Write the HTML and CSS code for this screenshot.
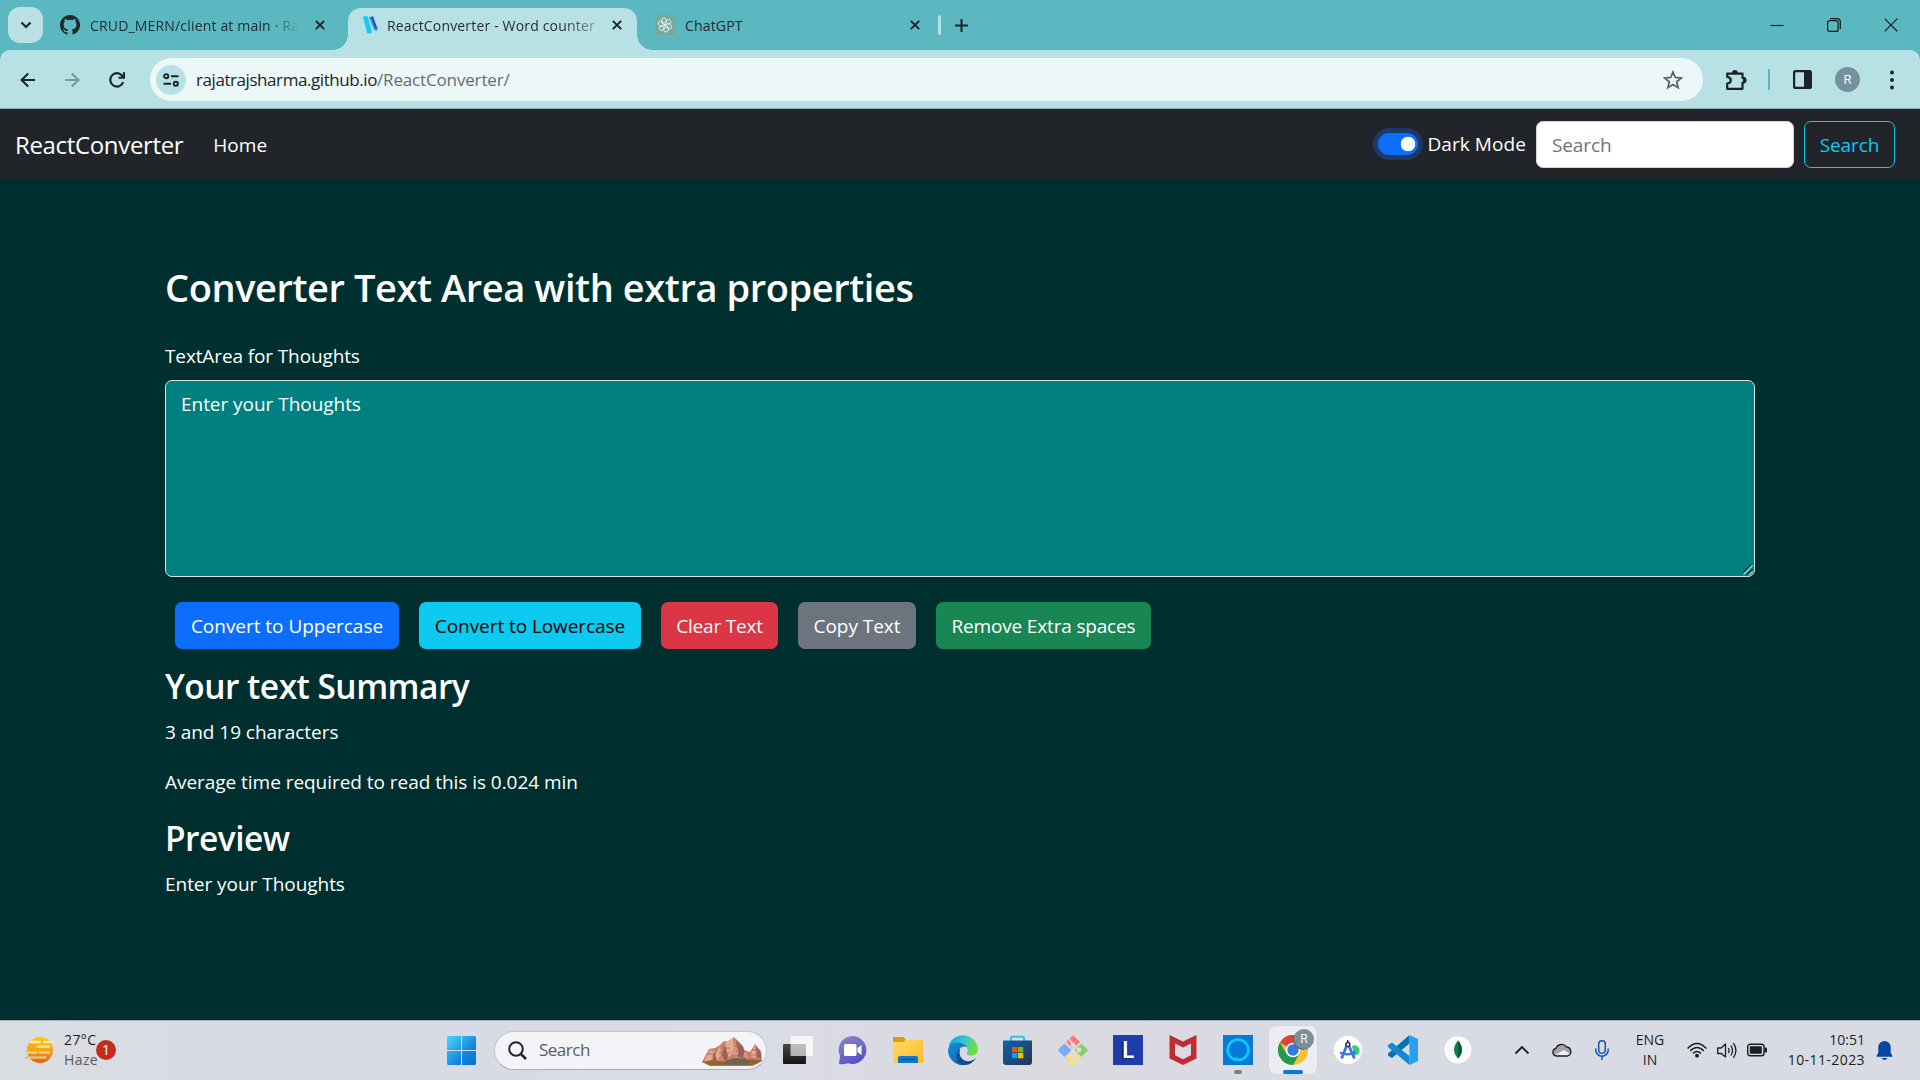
FILE: index.html
```html
<!DOCTYPE html>
<html lang="en">
<head>
<meta charset="utf-8">
<title>ReactConverter - Word counter</title>
<link rel="stylesheet" href="styles.css">
</head>
<body>
<header class="tabs">
  <button class="tab-search" aria-label="Search tabs"><svg width="12" height="8" viewBox="0 0 12 8"><path d="M1.5 1.5 6 6l4.500-4.500" fill="none" stroke="#1c2326" stroke-width="2.200"/></svg></button>
  <div class="tab tab-first">
    <svg class="fav" width="20" height="20" viewBox="0 0 16 16"><path fill="#1f2a30" d="M8 0C3.580 0 0 3.580 0 8c0 3.540 2.290 6.530 5.470 7.590.4.070.55-.17.55-.38v-1.490c-2.010.37-2.530-.49-2.690-.94-.09-.23-.48-.94-.82-1.130-.28-.15-.68-.52-.01-.53.63-.01 1.080.58 1.230.82.72 1.210 1.870.87 2.330.66.07-.52.28-.87.51-1.070-1.780-.2-3.640-.89-3.640-3.950 0-.87.31-1.590.82-2.150-.08-.2-.36-1.020.08-2.120 0 0 .67-.21 2.200.82a7.600 7.600 0 0 1 4 0c1.530-1.040 2.200-.82 2.200-.82.44 1.100.16 1.920.08 2.120.51.56.82 1.270.82 2.150 0 3.070-1.870 3.750-3.650 3.950.29.25.54.73.54 1.480v2.200c0 .21.15.46.55.38A8 8 0 0 0 8 0z"/></svg>
    <span class="tab-title">CRUD_MERN/client at main · Raj</span>
    <svg class="x" width="10" height="10" viewBox="0 0 10 10"><path d="M.8.8l8.400 8.400M9.200.8.8 9.200"/></svg>
  </div>
  <div class="tab tab-active">
    <svg class="fav" width="17" height="20" viewBox="0 0 17 20"><path d="M1 2Q4 0 6 2l4 15q-1 3-5 1z" fill="#19c9ee"/><path d="M7 2q3-1 4 1l4 13-3-1z" fill="#1b9be0"/><path d="M11 1l5 14-3-2-4-11z" fill="#2b55ad"/></svg>
    <span class="tab-title">ReactConverter - Word counter</span>
    <svg class="x" width="10" height="10" viewBox="0 0 10 10"><path d="M.8.8l8.400 8.400M9.200.8.8 9.200"/></svg>
  </div>
  <div class="tab tab-last">
    <svg class="fav" width="20" height="20" viewBox="0 0 20 20"><rect width="20" height="20" rx="3" fill="#75a99c"/><g transform="translate(2 2) scale(.8)" fill="none" stroke="#eef6f3" stroke-width="1.100"><g id="petal"><path d="M10 10V5.500l3-1.800a2.900 2.900 0 0 1 4 4L13 10"/></g><use href="#petal" transform="rotate(60 10 10)"/><use href="#petal" transform="rotate(120 10 10)"/><use href="#petal" transform="rotate(180 10 10)"/><use href="#petal" transform="rotate(240 10 10)"/><use href="#petal" transform="rotate(300 10 10)"/></g></svg>
    <span class="tab-title">ChatGPT</span>
    <svg class="x" width="10" height="10" viewBox="0 0 10 10"><path d="M.8.8l8.400 8.400M9.200.8.8 9.200"/></svg>
  </div>
  <i class="tab-sep"></i>
  <svg class="plus" width="13" height="13" viewBox="0 0 13 13"><path d="M6.500 0v13M0 6.500h13" stroke="#1c2326" stroke-width="2"/></svg>
  <div class="window-controls">
    <svg width="14" height="14" viewBox="0 0 14 14"><path d="M.5 7.500h13"/></svg>
    <svg width="14" height="14" viewBox="0 0 14 14"><rect x=".6" y="2.600" width="10.500" height="10.800" rx="2"/><path d="M3 .7h7q3.300 0 3.300 3.300v7"/></svg>
    <svg width="14" height="14" viewBox="0 0 14 14"><path d="M.7.7l12.600 12.600M13.300.7.7 13.300"/></svg>
  </div>
</header>

<div class="toolbar">
  <svg class="back" width="16" height="16" viewBox="0 0 16 16"><path d="M15 8H1.600M8.200 1.400 1.600 8l6.600 6.600"/></svg>
  <svg class="forward" width="16" height="16" viewBox="0 0 16 16"><path d="M1 8h13.400M7.800 1.400 14.400 8l-6.600 6.600"/></svg>
  <svg class="reload" width="18" height="18" viewBox="0 0 18 18"><path d="M15.200 11.200A6.700 6.700 0 1 1 14 4.500l1.600 1.700M16 1.200v5.500h-5.500"/></svg>
  <div class="omnibox">
    <span class="site-info"><svg width="16" height="14" viewBox="0 0 16 14"><g fill="none" stroke="#1c2326" stroke-width="1.900"><circle cx="3.200" cy="3.200" r="2.100"/><path d="M8 3.200h7.500M.5 10.800H8"/><circle cx="12.800" cy="10.800" r="2.100"/></g></svg></span>
    <span class="url"><b>rajatrajsharma.github.io</b><i>/ReactConverter/</i></span>
    <svg class="star" width="20" height="20" viewBox="0 0 20 20"><path d="M10 2l2.300 5.500 5.900.5-4.500 3.900 1.400 5.800-5.100-3.100-5.100 3.100 1.400-5.800L1.800 8l5.900-.5z" fill="none" stroke="#5b6467" stroke-width="1.800"/></svg>
  </div>
  <svg class="puzzle" width="22" height="22" viewBox="0 0 22 22"><path d="M2.200 4.700h15.300v4.200q3 0 3 2.300t-3 2.300v6.300H2.200v-5.300q3.600-.6 3.600-3.300T2.200 7.900z" fill="none" stroke="#1c2326" stroke-width="2.200" stroke-linejoin="round"/><path d="M7 4a2.900 2.900 0 0 1 5.800 0zM18 8.500a2.800 2.800 0 0 1 0 5.500z" fill="#1c2326"/></svg>
  <i class="tool-sep"></i>
  <svg class="panel" width="19" height="19" viewBox="0 0 19 19"><rect x="1.100" y="1.100" width="16.800" height="16.800" rx="1.500" fill="none" stroke="#1c2326" stroke-width="2.200"/><path d="M11 1h7v17h-7z" fill="#1c2326"/></svg>
  <span class="avatar">R</span>
  <svg class="dots" width="4" height="20" viewBox="0 0 4 20"><g fill="#1c2326"><circle cx="2" cy="2.500" r="2"/><circle cx="2" cy="10" r="2"/><circle cx="2" cy="17.500" r="2"/></g></svg>
</div>

<nav class="navbar">
  <a class="brand">ReactConverter</a>
  <a class="nav-link">Home</a>
  <label class="mode"><span class="switch"></span><span>Dark Mode</span></label>
  <input class="search-input" type="text" placeholder="Search">
  <button class="btn btn-outline">Search</button>
</nav>

<main class="page">
  <h1>Converter Text Area with extra properties</h1>
  <label class="area-label" for="thoughts">TextArea for Thoughts</label>
  <div class="area-wrap">
    <textarea class="area" id="thoughts" spellcheck="false">Enter your Thoughts</textarea>
    <svg class="grip" width="12" height="12" viewBox="0 0 12 12"><path d="M.5 9.500l9-9M5.500 10.500l5-5" stroke="#032c2d" stroke-width="1.500"/><path d="M1.500 10.500l9-9M6.800 11.200l4-4" stroke="#a5d3cf" stroke-width="1.500"/></svg>
  </div>
  <div class="actions">
    <button class="btn btn-primary">Convert to Uppercase</button>
    <button class="btn btn-info">Convert to Lowercase</button>
    <button class="btn btn-danger">Clear Text</button>
    <button class="btn btn-secondary">Copy Text</button>
    <button class="btn btn-success">Remove Extra spaces</button>
  </div>
  <h2>Your text Summary</h2>
  <p>3 and 19 characters</p>
  <p>Average time required to read this is 0.024 min</p>
  <h2>Preview</h2>
  <p>Enter your Thoughts</p>
</main>

<footer class="taskbar">
  <div class="weather">
    <svg width="30" height="26" viewBox="0 0 30 26"><defs><linearGradient id="sun" x2="0" y2="1"><stop offset="0" stop-color="#fdc90a"/><stop offset=".5" stop-color="#f6a313"/><stop offset="1" stop-color="#e4600c"/></linearGradient></defs><circle cx="15" cy="13" r="13" fill="url(#sun)"/><g stroke-linecap="round" stroke-width="2.400"><path d="M6 5h9M19 5h9.500" stroke="#f8e9b4"/><path d="M13 9.500h11" stroke="#fae5a8"/><path d="M1.500 15.500h10M15 15.500h9" stroke="#ead08c"/><path d="M1.500 20.500h19" stroke="#dcc388"/></g></svg>
    <div class="weather-text"><span class="temp">27°C</span><span class="cond">Haze</span></div>
    <span class="alert">1</span>
  </div>
  <div class="apps">
    <svg width="29" height="29" viewBox="0 0 29 29"><defs><linearGradient id="win" x2="1" y2="1"><stop offset="0" stop-color="#50d5fc"/><stop offset=".6" stop-color="#1688df"/><stop offset="1" stop-color="#0072d0"/></linearGradient></defs><path fill="url(#win)" d="M1 0h13v14H0V1zM15 0h13l1 1v13H15zM0 15h14v14H1l-1-1zM15 15h14v13l-1 1H15z"/></svg>
    <div class="task-search">
      <svg width="19" height="19" viewBox="0 0 19 19"><g fill="none" stroke="#262628" stroke-width="2"><circle cx="8" cy="8" r="6.800"/><path d="M12.800 12.800l5.200 5.200" stroke-width="2.600"/></g></svg>
      <span>Search</span>
      <svg class="rocks" width="61" height="30" viewBox="0 0 61 30"><path d="M0 25l7-13 6-1 5-3 4-4 5 1 5-5 4 4 5 5 1 4 6 2 5-8 6 7 1 10-9 5H8z" fill="#c98269"/><path d="M24 5l7-4 1 10-4 9-6-3zM8 13l4 1-3 10-7 1zM53 8l1 13-6-2zM18 9l1 8-4 7-2-5z" fill="#e5ab90"/><path d="M34 3l7 7 4 13-9-4zM54 9l5 7 0 6-4-2zM23 8l3 11-2 6-4-7zM12 15l3 8-4 3z" fill="#98605a"/><path d="M33 5l4 10-3 7-4-4zM43 13l4 9-6-2z" fill="#db957a"/><path d="M6 17h8M20 11h8M17 16h11M32 9h7M34 14h9M47 18h12M30 19h10M50 13h6" stroke="#a9624f" stroke-width=".8"/><path d="M0 25l10-2 14 2 16-3 20 1q-3 4-12 5.500H8z" fill="#94662f"/><path d="M21 26q11-8 24-3l4 2-8 3z" fill="#6f6259"/></svg>
    </div>
    <svg width="30" height="29" viewBox="0 0 30 29"><defs><linearGradient id="dark" x2="0" y2="1"><stop offset="0" stop-color="#484848"/><stop offset="1" stop-color="#151515"/></linearGradient></defs><rect y="8" width="23" height="20" rx="1" fill="url(#dark)"/><rect x="7.500" y="0" width="22.500" height="20" rx="1" fill="#fff" fill-opacity=".65"/><path d="M23 0h7v20h-7zM8 0h22v8H8z" fill="#f8f8f8" fill-opacity=".6"/></svg>
    <svg width="30" height="30" viewBox="0 0 30 30"><defs><linearGradient id="chat" x2=".5" y2="1"><stop offset="0" stop-color="#a07cc0"/><stop offset=".4" stop-color="#7575cf"/><stop offset="1" stop-color="#5a4fc4"/></linearGradient></defs><path d="M15 1a14 14 0 1 1-5 27.300Q5 30 1 29l1-8A14 14 0 0 1 15 1z" fill="url(#chat)"/><rect x="6" y="9" width="12.500" height="12" rx="1.500" fill="#fff"/><path d="M19.500 13l4-3v10l-4-3z" fill="#fff"/></svg>
    <svg width="30" height="28" viewBox="0 0 30 28"><defs><linearGradient id="fold" x2="1" y2="1"><stop offset="0" stop-color="#ffdc66"/><stop offset="1" stop-color="#fbbb29"/></linearGradient></defs><path d="M0 1h10.500l2.500 3-3 5H0z" fill="#dd9c0c"/><path d="M0 6h10l3-2h17v23H0z" fill="url(#fold)"/><path d="M5 27v-5q0-2 2-2h16q2 0 2 2v5z" fill="#0f78cc"/><path d="M8.500 23.500h13" stroke="#0a4c8c" stroke-width="1.200"/></svg>
    <svg width="30" height="30" viewBox="0 0 30 30"><defs><linearGradient id="e1" x2="1" y2=".3"><stop offset="0" stop-color="#1795dc"/><stop offset=".5" stop-color="#34c3d8"/><stop offset="1" stop-color="#6bdf4a"/></linearGradient><linearGradient id="e2" x2="1" y2="1"><stop offset="0" stop-color="#1592de"/><stop offset="1" stop-color="#0c57a8"/></linearGradient></defs><path d="M1 10A15 15 0 0 1 30 14q0 6-6.500 6.500-4.500 0-5-2 1.700-1.500 1-4Q17 8 9 8q-5 0-8 4z" fill="url(#e1)"/><path d="M0 15q1-7 8-7.500 8 0 11 4.500-8-2-8 6 0 7 7 12A15 15 0 0 1 0 15z" fill="url(#e2)"/><path d="M12 14q-2 8 4.500 11.500 6 2.500 12-3Q23 31 15 30 7 27 9 19q.5-3.500 3-5z" fill="#134b8c"/></svg>
    <svg width="30" height="30" viewBox="0 0 30 30"><defs><linearGradient id="st" x2="1" y2="1"><stop offset="0" stop-color="#0765b3"/><stop offset="1" stop-color="#28344f"/></linearGradient></defs><path d="M8 7V3q0-1.200 1.200-1.200h10.600Q21 1.800 21 3v4" fill="none" stroke="#32bdf0" stroke-width="2"/><path d="M0 5.500h29V27q0 3-3 3H3q-3 0-3-3z" fill="url(#st)"/><path d="M9 12h5.300v5.300H9z" fill="#f25022"/><path d="M15 12h5.300v5.300H15z" fill="#7fba00"/><path d="M9 18h5.300v5.300H9z" fill="#00a4ef"/><path d="M15 18h5.300v5.300H15z" fill="#ffb900"/></svg>
    <svg width="30" height="30" viewBox="0 0 30 30"><path d="M14 1q1-1 2 0l6 6-7 7-7-7z" fill="#f87c7c"/><path d="M6.500 8.500l7 6.500-7 7L.7 16q-1-1 0-2z" fill="#7dabf8"/><path d="M23.500 8.500l5.800 5.500q1 1 0 2l-5.800 6-7-7z" fill="#89cf69"/><path d="M15 16.500l7 7-6 5.800q-1 .9-2 0L8 23.500z" fill="#fbdf77"/><g stroke="#dddce2" stroke-width="1.500" fill="#dddce2"><path d="M11 4l4 6v13M15 10l6 5" fill="none"/><circle cx="15" cy="10" r="1.700"/><circle cx="21" cy="15" r="1.700"/><circle cx="15" cy="22" r="1.700"/></g></svg>
    <span class="l-app">L</span>
    <svg width="30" height="30" viewBox="0 0 30 30"><path d="M1.500 0L15 6.500 28.500 0v23.500L15 30 1.500 23.500zM7 8.500v11.800l8 3.900 8-3.900V8.500l-8 4z" fill="#c02c31" fill-rule="evenodd"/></svg>
    <span class="running"><svg width="30" height="30" viewBox="0 0 30 30"><path d="M0 0h30v30H0z" fill="#0779d8"/><path d="M13 25a10.300 10.300 0 1 1 4 0q-3.200.3-4-2.500" fill="none" stroke="#0ccdfb" stroke-width="2.600"/></svg></span>
    <span class="chrome"><svg width="30" height="30" viewBox="0 0 30 30"><circle cx="15" cy="15" r="15" fill="#fbc02d"/><path d="M15 15L2 7.500A15 15 0 0 1 28 7.500H15z" fill="#db4437"/><path d="M2 7.500A15 15 0 0 0 15 30l6.500-11.200L15 15 8.500 18.700z" fill="#249a50"/><circle cx="15" cy="15" r="7.300" fill="#fff"/><circle cx="15" cy="15" r="5.700" fill="#3379e8"/></svg><span class="profile">R</span></span>
    <svg width="30" height="30" viewBox="0 0 30 30"><circle cx="15" cy="15" r="13.500" fill="#fff"/><circle cx="15" cy="15" r="13.300" fill="none" stroke="#fff" stroke-width="1.800" stroke-dasharray="4 1.200"/><path d="M19 11a5 5 0 0 1 5 9l-3 .5z" fill="#35c97a"/><path d="M14 10L8.500 23.500M15.500 10l6 13.500" stroke="#3b74e8" stroke-width="2.800"/><path d="M7 17.500q8 4 15.500-.5" stroke="#3b74e8" stroke-width="2.200" fill="none"/><path d="M14.800 5v3" stroke="#26364b" stroke-width="1.600"/><circle cx="14.800" cy="9.500" r="2" fill="#fff" stroke="#26364b" stroke-width="1.500"/></svg>
    <svg width="30" height="30" viewBox="0 0 30 30"><path d="M21.500 0v8.500L4 23 0 20.500v-2z" fill="#0770b4"/><path d="M4 7.500L0 10v2l21.500 18v-9z" fill="#1489d2"/><path d="M21.500 0L30 4v22l-8.500 4z" fill="#27a0ee"/></svg>
    <svg width="30" height="30" viewBox="0 0 30 30"><circle cx="15" cy="15.400" r="14" fill="#c8cad2"/><circle cx="15" cy="15" r="13.700" fill="#fafafa"/><path d="M15 5.500Q23 15 15 23.500 7 15 15 5.500z" fill="#12804a"/><path d="M15 5.500Q23 15 15 23.500z" fill="#095a36"/></svg>
  </div>
  <div class="tray">
    <svg class="t-chev" width="16" height="10" viewBox="0 0 16 10"><path d="M1.500 8.500 8 2l6.500 6.500" fill="none" stroke="#1d1d1f" stroke-width="1.800"/></svg>
    <svg class="t-cloud" width="20" height="14" viewBox="0 0 20 14"><path d="M4.500 13A3.900 3.900 0 0 1 4 5.300 6 6 0 0 1 14.500 4 4.600 4.600 0 0 1 15.500 13z" fill="#a4a4a8"/><path d="M4.500 13 3 12l9-5 6 4-2.500 2z" fill="#f1f1f2"/><path d="M4.500 13A3.900 3.900 0 0 1 4 5.300 6 6 0 0 1 14.500 4 4.600 4.600 0 0 1 15.500 13z" fill="none" stroke="#1d1d1f" stroke-width="1.300"/></svg>
    <svg class="t-mic" width="14" height="20" viewBox="0 0 14 20"><g fill="none" stroke="#1555a8" stroke-width="1.500"><rect x="3.700" y=".8" width="6.600" height="12.400" rx="3.300"/><path d="M.8 8.500v1.500a6.200 6.200 0 0 0 12.400 0V8.500M7 16.200V20"/></g></svg>
    <div class="lang"><span>ENG</span><span>IN</span></div>
    <svg class="t-wifi" width="20" height="16" viewBox="0 0 20 16"><g fill="none" stroke="#1d1d1f" stroke-width="1.400"><path d="M.6 6.500q9.400-10 18.800 0M3.200 9q6.800-7 13.600 0M5.900 11.500q4.100-4 8.200 0"/></g><circle cx="10" cy="13.700" r="1.900" fill="#1d1d1f"/></svg>
    <svg class="t-vol" width="20" height="17" viewBox="0 0 20 17"><g fill="none" stroke="#1d1d1f" stroke-width="1.300"><path d="M.7 6h3.500L8.500 2v13L4.200 11.500H.7z" stroke-linejoin="round"/><path d="M11.300 6q1.600 2.500 0 5M13.800 3.500q3.500 5 0 10M16.400 1.200q5 7.300 0 14.600"/></g></svg>
    <svg class="t-bat" width="20" height="14" viewBox="0 0 20 14"><rect x=".7" y="1.200" width="16.300" height="11.600" rx="2.500" fill="none" stroke="#1d1d1f" stroke-width="1.400"/><rect x="2.800" y="3.300" width="12" height="7.400" rx="1" fill="#1d1d1f"/><path d="M17.500 4.500h1.300q1.200 0 1.200 1.200v2.600q0 1.200-1.200 1.200h-1.300z" fill="#1d1d1f"/></svg>
    <div class="clock"><span class="time">10:51</span><span class="date">10-11-2023</span></div>
    <svg class="t-bell" width="17" height="19" viewBox="0 0 17 19"><path d="M8.500 0a6.200 6.200 0 0 1 6.200 6.200v5.600L16.500 15v.8H.5V15l1.800-3.200V6.200A6.200 6.200 0 0 1 8.500 0zM5.700 17h5.600q-.8 2-2.800 2t-2.800-2z" fill="#0446a0"/></svg>
  </div>
</footer>
</body>
</html>
```
FILE: styles.css
```css
* { box-sizing: border-box; }

body {
  margin: 0;
  width: 1920px;
  height: 1080px;
  overflow: hidden;
  display: flex;
  flex-direction: column;
  /* the strip colour shows behind the toolbar's rounded corners */
  background: linear-gradient(#5bb8c1 70px, #002f2f 70px);
  color: #fff;
  font: 19px/30px "Open Sans", "Noto Sans", sans-serif;
}

svg { display: block; flex: none; }
button, input, textarea { font: inherit; margin: 0; }

/* Browser tab strip */
.tabs {
  height: 50px;
  flex: none;
  display: flex;
  align-items: center;
  padding-left: 8px;
  color: #1f2a30;
  font-size: 14px;
}

.tab-search {
  width: 35px;
  height: 36px;
  border: 0;
  border-radius: 12px;
  background: #b7e1e4;
  display: grid;
  place-items: center;
  padding: 0;
}

.tab { display: flex; align-items: center; height: 42px; }
.tab .x { stroke: #1c2326; stroke-width: 1.9; }

.tab-title {
  flex: none;
  overflow: hidden;
  white-space: nowrap;
  line-height: 24px;
  padding-top: 1px;
  letter-spacing: .17px;
}

.tab-first { margin-left: 17px; width: 288px; }
.tab-first .tab-title {
  width: 215px;
  margin: 0 10px;
  -webkit-mask-image: linear-gradient(90deg, #000 180px, transparent 209px);
  mask-image: linear-gradient(90deg, #000 180px, transparent 209px);
}

.tab-active {
  position: relative;
  align-self: flex-end;
  width: 289px;
  height: 42px;
  padding: 0 0 8px 14px;
  background: #b7e1e4;
  border-radius: 13px 13px 0 0;
}
.tab-active::before,
.tab-active::after {
  content: "";
  position: absolute;
  bottom: 0;
  width: 15px;
  height: 15px;
}
.tab-active::before { left: -15px; background: radial-gradient(circle at 0 0, transparent 14.5px, #b7e1e4 15px); }
.tab-active::after { right: -15px; background: radial-gradient(circle at 100% 0, transparent 14.5px, #b7e1e4 15px); }
.tab-active .tab-title {
  width: 210px;
  margin: 0 15px 0 8px;
  -webkit-mask-image: linear-gradient(90deg, #000 175px, rgba(0, 0, 0, .35) 208px);
  mask-image: linear-gradient(90deg, #000 175px, rgba(0, 0, 0, .35) 208px);
}

.tab-last { margin-left: 18px; width: 283px; }
.tab-last .tab-title { width: 215px; margin: 0 10px; }

.tab-sep { width: 3px; height: 20px; background: #b7e1e4; border-radius: 2px; }
.plus { margin-left: 14px; }

.window-controls {
  display: flex;
  gap: 43px;
  margin: 0 22px 0 auto;
  fill: none;
  stroke: #10191c;
  stroke-width: 1.2;
}

/* Address bar */
.toolbar {
  height: 59px;
  flex: none;
  display: flex;
  align-items: center;
  padding: 0 26px 0 20px;
  background: #b7e1e4;
  box-shadow: inset 0 -1px #8eb0b3;
  border-radius: 10px 10px 0 0;
}

.back, .forward, .reload { fill: none; stroke: #1c2326; stroke-width: 2.1; }
.forward { margin-left: 28px; stroke: #7b989c; }
.reload { margin-left: 28px; }

.omnibox {
  width: 1553px;
  height: 43px;
  margin-left: 24px;
  padding: 0 20px 0 6px;
  display: flex;
  align-items: center;
  border-radius: 22px;
  background: #ecf8f8;
}
.site-info {
  width: 30px;
  height: 30px;
  border-radius: 50%;
  background: #b7e1e4;
  display: grid;
  place-items: center;
}
.url { margin-left: 10px; font-size: 17px; }
.url b { font-weight: 400; letter-spacing: -.43px; color: #1c2326; }
.url i { font-style: normal; letter-spacing: -.15px; color: #5f6e71; }
.star { margin-left: auto; }

.puzzle { margin-left: 22px; }
.tool-sep { width: 2px; height: 21px; margin-left: 21px; background: #5bb8c1; }
.panel { margin-left: 23px; }
.avatar {
  width: 25px;
  height: 25px;
  margin-left: 23px;
  border-radius: 50%;
  background: #78909c;
  color: #f3f6f7;
  font: 13px/25px Roboto, sans-serif;
  text-align: center;
}
.dots { margin-left: auto; }

/* Site navigation */
.navbar {
  height: 70px;
  flex: none;
  display: flex;
  align-items: center;
  padding: 1px 25px 0 15px;
  background: #212529;
}
.brand { font-size: 24px; letter-spacing: -.34px; }
.nav-link { margin-left: 30px; letter-spacing: .05px; }
.mode {
  margin-left: auto;
  display: flex;
  align-items: center;
  gap: 9px;
  padding-bottom: 2px;
  letter-spacing: .08px;
}
.switch {
  width: 40px;
  height: 22px;
  border-radius: 11px;
  background: radial-gradient(circle at 30px 11px, #fff 7px, transparent 7.6px) #0d6efd;
  box-shadow: 0 0 0 5px #1d3a66;
}
.search-input {
  width: 258px;
  height: 47px;
  margin-left: 10px;
  padding: 0 15px;
  border: 1px solid #ced4da;
  border-radius: 7px;
  background: #fff;
  letter-spacing: -.11px;
}
.search-input::placeholder { color: #6c757d; opacity: 1; }

.btn {
  height: 47px;
  padding: 0 14px;
  border: 1px solid transparent;
  border-radius: 7px;
  color: #fff;
  white-space: nowrap;
  letter-spacing: -.07px;
}
.btn-outline {
  width: 91px;
  margin-left: 10px;
  border-color: #0dcaf0;
  background: transparent;
  color: #0dcaf0;
}

/* Page content */
.page { flex: 1; padding: 84px 165px 0; background: #002f2f; }
h1, h2 { margin: 0; font-weight: 600; }
h1 { font-size: 38px; line-height: 48px; letter-spacing: -.42px; }
h2 { font-size: 33.5px; line-height: 42px; letter-spacing: -.52px; margin-bottom: 10px; }
p { margin: 0 0 20px; letter-spacing: -.04px; }
.area-label { display: block; margin: 30px 0 9px; letter-spacing: -.12px; }
.area-wrap { position: relative; }
.area {
  display: block;
  width: 1590px;
  height: 197px;
  padding: 8px 15px;
  border: 1px solid #dee2e6;
  border-radius: 7px;
  outline: 0;
  background: #008080;
  color: #fff;
  letter-spacing: -.04px;
  resize: none;
}
.grip { position: absolute; right: 1px; bottom: 1px; pointer-events: none; }
.actions { display: flex; gap: 20px; padding: 25px 10px 16px; }
.btn-primary { width: 224px; background: #0d6efd; letter-spacing: -.03px; }
.btn-info { width: 222px; background: #0dcaf0; color: #000; }
.btn-danger { width: 117px; background: #dc3545; letter-spacing: -.2px; }
.btn-secondary { width: 118px; background: #6c757d; letter-spacing: -.05px; }
.btn-success { width: 215px; background: #198754; letter-spacing: -.17px; }

/* Desktop taskbar */
.taskbar {
  height: 60px;
  flex: none;
  display: flex;
  align-items: center;
  padding-bottom: 1px;
  border-top: 1px solid #a9aeb4;
  background: linear-gradient(90deg, #dadddf 0, #d8dbe5 12%, #d9dbe6 40%, #dbdae0 52%, #d9dbe3 65%, #d8dbe4 100%);
  color: #1f1f21;
  font-size: 14px;
  line-height: 20px;
}
.weather { position: relative; width: 447px; flex: none; display: flex; align-items: center; padding-left: 25px; }
.weather-text { display: flex; flex-direction: column; margin-left: 9px; letter-spacing: .4px; }
.cond { color: #59595c; }
.alert {
  position: absolute;
  left: 96px;
  top: 10px;
  width: 20px;
  height: 20px;
  border-radius: 50%;
  background: #c42b1c;
  color: #fff;
  text-align: center;
}
.apps { display: flex; align-items: center; gap: 25px; flex: none; }
.task-search {
  width: 273px;
  height: 39px;
  margin: 0 -9px 0 -7px;
  padding: 0 3px 0 13px;
  display: flex;
  align-items: center;
  border: 1px solid #c3c5cf;
  border-bottom-color: #a9abb5;
  border-radius: 20px;
  background: #f3f4f8;
  color: #5b5c60;
  font-size: 17px;
  letter-spacing: -.5px;
}
.task-search span { margin-left: 12px; }
.rocks { margin-left: auto; margin-top: 3px; }
.l-app {
  width: 30px;
  height: 30px;
  background: #1e3cab;
  color: #fff;
  text-align: center;
  font: 600 23px/29px "Noto Sans", sans-serif;
  text-shadow: -2px 1px #10305c;
}
.running, .chrome { position: relative; width: 30px; height: 30px; }
.running::after, .chrome::after {
  content: "";
  position: absolute;
  top: 35px;
  left: 11px;
  width: 8px;
  height: 4px;
  border-radius: 2px;
  background: #7e7e84;
}
.chrome::before {
  content: "";
  position: absolute;
  inset: -9px;
  border-radius: 6px;
  background: #ececf2;
  box-shadow: 0 0 1px #b0b0ba;
}
.chrome svg { position: relative; }
.chrome::after { left: 5px; width: 20px; background: #0779d8; }
.profile {
  position: absolute;
  left: 16px;
  top: -6px;
  width: 20px;
  height: 20px;
  border-radius: 50%;
  background: #78909c;
  box-shadow: -1px 1px #566d78;
  color: #f3f6f7;
  font: 12px/20px Roboto, sans-serif;
  text-align: center;
}
.tray { display: flex; align-items: center; margin-left: auto; padding-right: 27px; }
.t-cloud { margin-left: 22px; }
.t-mic { margin-left: 23px; }
.lang { display: flex; flex-direction: column; align-items: center; width: 30px; margin-left: 26px; }
.t-wifi { margin-left: 22px; }
.t-vol, .t-bat { margin-left: 10px; }
.clock { display: flex; flex-direction: column; align-items: flex-end; width: 88px; margin-left: 10px; }
.date { letter-spacing: .42px; }
.t-bell { margin-left: 11px; }
```
